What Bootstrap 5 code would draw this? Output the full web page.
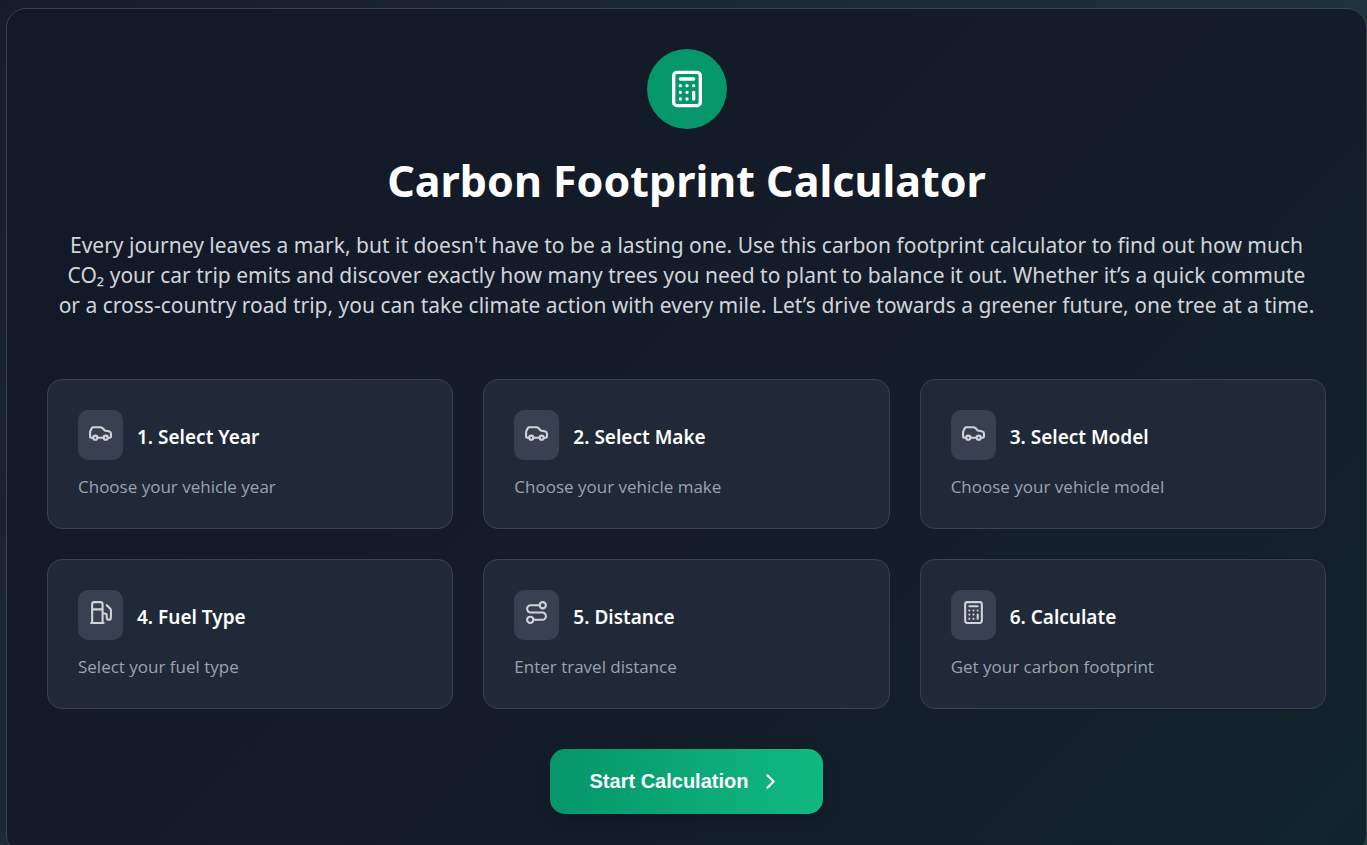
<!DOCTYPE html>
<html lang="en">
<head>
<meta charset="utf-8">
<meta name="viewport" content="width=device-width, initial-scale=1">
<title>Carbon Footprint Calculator</title>
<link href="https://cdn.jsdelivr.net/npm/bootstrap@5.3.0/dist/css/bootstrap.min.css" rel="stylesheet">
<style>
  body {
    font-family: "Segoe UI", "Noto Sans", "Open Sans", sans-serif;
    background: linear-gradient(135deg, #161c2a 0%, #1d2c36 45%, #20403f 100%);
    min-height: 100vh;
    padding: 8px 0 0 6px;
    scrollbar-width: none;
  }
  body::-webkit-scrollbar { display: none; }
  .calc-panel {
    background: linear-gradient(135deg, #121827 0%, #141b29 50%, #11242c 100%);
    border: 1px solid #374151;
    border-radius: 20px;
    padding: 40px;
  }
  .hero-icon { width: 80px; height: 80px; background: #059669; margin-bottom: 24px; }
  .calc-title { font-size: 43px; line-height: 56px; margin-bottom: 21px; }
  .calc-intro { font-size: 21px; line-height: 30px; color: #d1d5db; padding: 0 8px; margin-bottom: 59px; }
  .steps { --bs-gutter-x: 30px; --bs-gutter-y: 30px; margin-bottom: 40px; }
  .step-card {
    background: #1f2937;
    border: 1px solid #374151;
    border-radius: 15px;
    padding: 30px;
  }
  .step-head { gap: 14px; margin-bottom: 16px; }
  .step-icon { width: 45px; height: 50px; padding: 10px; border-radius: 10px; background: #374151; color: #d1d5db; }
  .step-title { font-size: 19px; line-height: 28px; font-weight: 600; color: #fff; padding-top: 3px; }
  .step-text { font-family: "Segoe UI", "Open Sans", sans-serif; font-size: 17px; line-height: 22px; color: #9ca3af; }
  .start-btn {
    --bs-btn-color: #fff; --bs-btn-hover-color: #fff; --bs-btn-active-color: #fff;
    font: 700 20px/25px "Liberation Sans", Arial, sans-serif;
    background: linear-gradient(90deg, #059669, #10b981);
    border: 0;
    border-radius: 15px;
    padding: 20px 40px;
    gap: 10px;
    box-shadow: 0 5px 15px rgba(0, 0, 0, .2);
  }
  .line-icon { fill: none; stroke: currentColor; stroke-width: 2; stroke-linecap: round; stroke-linejoin: round; display: block; }
</style>
</head>
<body>
<svg class="d-none" aria-hidden="true">
  <symbol id="i-calc" viewBox="0 0 24 24"><rect width="16" height="20" x="4" y="2" rx="2"/><path d="M8 6h8M16 14v4M16 10h.01M12 10h.01M8 10h.01M12 14h.01M8 14h.01M12 18h.01M8 18h.01"/></symbol>
  <symbol id="i-car" viewBox="0 0 24 24"><path d="M19 17h2c.6 0 1-.4 1-1v-3c0-.9-.7-1.7-1.5-1.9C18.7 10.6 16 10 16 10s-1.3-1.4-2.2-2.3c-.5-.4-1.1-.7-1.8-.7H5c-.6 0-1.1.4-1.4.9l-1.4 2.9A3.7 3.7 0 0 0 2 12v4c0 .6.4 1 1 1h2M9 17h6"/><circle cx="7" cy="17" r="2"/><circle cx="17" cy="17" r="2"/></symbol>
  <symbol id="i-fuel" viewBox="0 0 24 24"><path d="M3 22h12M4 9h10M14 22V4a2 2 0 0 0-2-2H6a2 2 0 0 0-2 2v18M14 13h2a2 2 0 0 1 2 2v2a2 2 0 0 0 4 0V9.83a2 2 0 0 0-.59-1.42L18 5"/></symbol>
  <symbol id="i-route" viewBox="0 0 24 24"><circle cx="6" cy="19" r="3"/><path d="M9 19h8.5a3.5 3.5 0 0 0 0-7h-11a3.5 3.5 0 0 1 0-7H15"/><circle cx="18" cy="5" r="3"/></symbol>
  <symbol id="i-next" viewBox="0 0 24 24"><path d="m9 18 6-6-6-6"/></symbol>
</svg>

<main class="calc-panel text-center">
  <div class="hero-icon rounded-circle d-flex align-items-center justify-content-center mx-auto">
    <svg class="line-icon text-white" width="40" height="40"><use href="#i-calc"/></svg>
  </div>
  <h1 class="calc-title fw-bold text-white">Carbon Footprint Calculator</h1>
  <p class="calc-intro">Every journey leaves a mark, but it doesn't have to be a lasting one. Use this carbon footprint calculator to find out how much CO₂ your car trip emits and discover exactly how many trees you need to plant to balance it out. Whether it’s a quick commute or a cross-country road trip, you can take climate action with every mile. Let’s drive towards a greener future, one tree at a time.</p>

  <div class="row row-cols-1 row-cols-md-2 row-cols-lg-3 steps text-start">
    <div class="col"><section class="step-card h-100">
      <div class="step-head d-flex align-items-center"><span class="step-icon"><svg class="line-icon" width="25" height="25"><use href="#i-car"/></svg></span><h2 class="step-title mb-0">1. Select Year</h2></div>
      <p class="step-text mb-0">Choose your vehicle year</p>
    </section></div>
    <div class="col"><section class="step-card h-100">
      <div class="step-head d-flex align-items-center"><span class="step-icon"><svg class="line-icon" width="25" height="25"><use href="#i-car"/></svg></span><h2 class="step-title mb-0">2. Select Make</h2></div>
      <p class="step-text mb-0">Choose your vehicle make</p>
    </section></div>
    <div class="col"><section class="step-card h-100">
      <div class="step-head d-flex align-items-center"><span class="step-icon"><svg class="line-icon" width="25" height="25"><use href="#i-car"/></svg></span><h2 class="step-title mb-0">3. Select Model</h2></div>
      <p class="step-text mb-0">Choose your vehicle model</p>
    </section></div>
    <div class="col"><section class="step-card h-100">
      <div class="step-head d-flex align-items-center"><span class="step-icon"><svg class="line-icon" width="25" height="25"><use href="#i-fuel"/></svg></span><h2 class="step-title mb-0">4. Fuel Type</h2></div>
      <p class="step-text mb-0">Select your fuel type</p>
    </section></div>
    <div class="col"><section class="step-card h-100">
      <div class="step-head d-flex align-items-center"><span class="step-icon"><svg class="line-icon" width="25" height="25"><use href="#i-route"/></svg></span><h2 class="step-title mb-0">5. Distance</h2></div>
      <p class="step-text mb-0">Enter travel distance</p>
    </section></div>
    <div class="col"><section class="step-card h-100">
      <div class="step-head d-flex align-items-center"><span class="step-icon"><svg class="line-icon" width="25" height="25"><use href="#i-calc"/></svg></span><h2 class="step-title mb-0">6. Calculate</h2></div>
      <p class="step-text mb-0">Get your carbon footprint</p>
    </section></div>
  </div>

  <button type="button" class="btn start-btn d-inline-flex align-items-center">Start Calculation<svg class="line-icon" width="25" height="25" aria-hidden="true"><use href="#i-next"/></svg></button>
</main>
<script src="https://cdn.jsdelivr.net/npm/bootstrap@5.3.0/dist/js/bootstrap.bundle.min.js"></script>
</body>
</html>
